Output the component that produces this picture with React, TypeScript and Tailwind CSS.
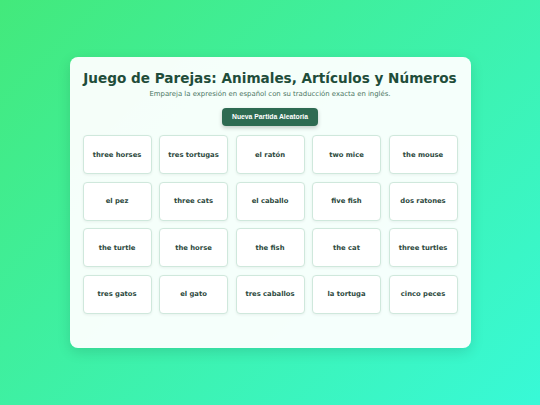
const cards = [
  'three horses', 'tres tortugas', 'el ratón', 'two mice', 'the mouse',
  'el pez', 'three cats', 'el caballo', 'five fish', 'dos ratones',
  'the turtle', 'the horse', 'the fish', 'the cat', 'three turtles',
  'tres gatos', 'el gato', 'tres caballos', 'la tortuga', 'cinco peces',
];

export default function App() {
  return (
    <div className="flex h-[405px] w-[540px] items-center justify-center bg-[linear-gradient(135deg,#43e97b_0%,#38f9d7_100%)] font-['DejaVu_Sans',sans-serif]">
      <div className="w-[401px] rounded-lg bg-white/95 px-[13px] pt-[11px] pb-[34px] shadow-[0_4px_14px_rgba(0,0,0,0.12)]">
        <h1 className="whitespace-nowrap text-center text-[13.6px] font-bold leading-[20px] text-[#1f4d3a]">
          Juego de Parejas: Animales, Artículos y Números
        </h1>
        <p className="mt-[1px] text-center text-[6.9px] leading-[11px] text-[#4a7562]">
          Empareja la expresión en español con su traducción exacta en inglés.
        </p>
        <div className="mt-[8px] flex justify-center">
          <button className="h-[18px] rounded-[4px] bg-[#2e6b52] px-[10px] font-['Liberation_Sans',sans-serif] text-[6.8px] font-bold text-white shadow-[0_2px_4px_rgba(0,0,0,0.2)]">
            Nueva Partida Aleatoria
          </button>
        </div>
        <div className="mt-[9px] grid grid-cols-5 gap-[7.5px]">
          {cards.map((c) => (
            <div
              key={c}
              className="flex h-[39px] items-center justify-center rounded-[4px] border border-[#cfe8dc] bg-white text-[6.8px] font-bold text-[#2d4a3e] shadow-[0_1px_3px_rgba(0,0,0,0.06)]"
            >
              {c}
            </div>
          ))}
        </div>
      </div>
    </div>
  );
}
